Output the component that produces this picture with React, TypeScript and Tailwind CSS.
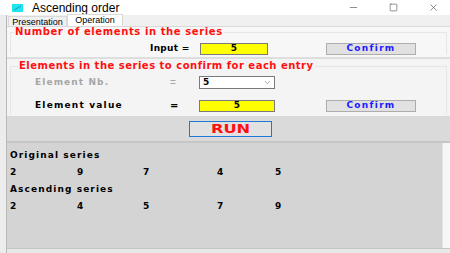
import { Minus, Square, X, ChevronDown } from "lucide-react";

const ORIGINAL = [2, 9, 7, 4, 5];
const SORTED = [2, 4, 5, 7, 9];
const COLS = ["w-[67px]", "w-[66px]", "w-[74px]", "w-[58px]", "w-[40px]"];

const bold = "font-['DejaVu_Sans',Verdana,sans-serif] font-bold";

function Confirm() {
  return (
    <button className={`w-[90px] h-[12px] border border-[#adadad] bg-[#e1e1e1] text-[#1a1aff] text-[9px] tracking-[1.3px] leading-none flex items-center justify-center ${bold}`}>
      Confirm
    </button>
  );
}

function Row({ values }: { values: number[] }) {
  return (
    <div className="flex h-[17px] items-center">
      {values.map((v, i) => (
        <span key={i} className={`${COLS[i]} text-[9px] text-black ${bold}`}>
          {v}
        </span>
      ))}
    </div>
  );
}

export default function App() {
  return (
    <div className="w-[450px] h-[253px] overflow-hidden bg-[#f0f0f0] font-['Liberation_Sans',Arial,sans-serif] flex flex-col">
      {/* title bar */}
      <div className="h-[15px] bg-white flex items-center shrink-0">
        <svg width="11" height="8" viewBox="0 0 11 8" className="ml-[12px]">
          <rect width="11" height="8" fill="#20e4ee" />
          <path d="M2 6 L9 2" stroke="#1c9fc0" strokeWidth="1" />
        </svg>
        <span className="ml-[9px] text-[12px] text-black leading-none">Ascending order</span>
        <div className="ml-auto flex items-center gap-[30px] mr-[11px] text-[#333]">
          <Minus size={11} strokeWidth={1.2} />
          <Square size={9} strokeWidth={1.4} />
          <X size={11} strokeWidth={1.2} />
        </div>
      </div>

      <div className="flex flex-1 min-h-0">
        <div className="w-[7px] bg-[#ececec] border-r border-[#b8b8b8] shrink-0" />
        <div className="flex-1 flex flex-col min-w-0">
          {/* tabs */}
          <div className="h-[12px] flex items-end pl-[1px] border-b border-[#d9d9d9] shrink-0">
            <div className="h-[10px] w-[59px] border border-b-0 border-[#d9d9d9] bg-[#f0f0f0] text-[9px] leading-[10px] text-black text-center">
              Presentation
            </div>
            <div className="h-[12px] w-[56px] border border-b-0 border-[#d9d9d9] bg-white text-[9px] leading-[11px] text-black text-center">
              Operation
            </div>
          </div>

          {/* group 1 */}
          <div className="h-[30px] bg-[#f7f7f7] px-[3px] shrink-0">
            <fieldset className="h-[28px] border border-[#e6e6e6] border-b-transparent pl-[3px]">
              <legend className={`px-[1px] text-[10px] tracking-[0.6px] leading-[10px] text-[#ff1010] ${bold}`}>
                Number of elements in the series
              </legend>
              <div className="flex items-center mt-[5px]">
                <span className={`ml-[136px] w-[50px] text-[9px] tracking-[0.3px] text-black ${bold}`}>Input =</span>
                <div className={`w-[68px] h-[12px] border border-[#7a7a7a] bg-[#ffff00] text-[9px] flex items-center justify-center leading-none ${bold}`}>
                  5
                </div>
                <div className="ml-[58px]">
                  <Confirm />
                </div>
              </div>
            </fieldset>
          </div>

          <div className="h-[2px] bg-[#dedede] shrink-0" />

          {/* group 2 */}
          <div className="h-[57px] bg-[#f4f4f4] px-[3px] pt-[2px] shrink-0">
            <fieldset className="h-[54px] border border-[#e6e6e6] border-b-transparent pl-[3px]">
              <legend className={`ml-[4px] px-[1px] text-[10px] tracking-[0.5px] leading-[10px] text-[#ff1010] ${bold}`}>
                Elements in the series to confirm for each entry
              </legend>
              <div className="flex items-center mt-[4px]">
                <span className={`ml-[21px] w-[135px] text-[9px] tracking-[1.1px] text-[#a6a6a6] ${bold}`}>Element Nb.</span>
                <span className="w-[29px] text-[10px] text-[#a6a6a6]">=</span>
                <div className={`w-[76px] h-[13px] border border-[#7a7a7a] bg-white text-[9px] flex items-center justify-between pl-[3px] pr-[2px] leading-none ${bold}`}>
                  <span>5</span>
                  <ChevronDown size={9} strokeWidth={1.5} className="text-[#666]" />
                </div>
              </div>
              <div className="flex items-center mt-[8px]">
                <span className={`ml-[21px] w-[135px] text-[9px] tracking-[1.2px] text-black ${bold}`}>Element value</span>
                <span className={`w-[29px] text-[10px] text-black ${bold}`}>=</span>
                <div className={`w-[76px] h-[12px] border border-[#7a7a7a] bg-[#ffff00] text-[9px] flex items-center justify-center leading-none ${bold}`}>
                  5
                </div>
                <div className="ml-[51px]">
                  <Confirm />
                </div>
              </div>
            </fieldset>
          </div>

          {/* run */}
          <div className="h-[25px] bg-[#dadada] flex items-center shrink-0">
            <button className="ml-[182px] w-[83px] h-[16px] border-[1.5px] border-[#1e78d7] bg-[#e1e1e1] flex items-center justify-center">
              <span className={`inline-block scale-x-[1.35] text-[#ff1010] text-[12px] leading-none ${bold}`}>RUN</span>
            </button>
          </div>

          {/* output */}
          <div className="h-[107px] flex border-t-2 border-[#c6c6c6] shrink-0">
            <div className="flex-1 bg-[#d4d4d4] pl-[3px] pt-[4px]">
              <div className={`h-[17px] flex items-center text-[9px] tracking-[1.1px] text-black ${bold}`}>Original series</div>
              <Row values={ORIGINAL} />
              <div className={`h-[17px] flex items-center text-[9px] tracking-[1.1px] text-black ${bold}`}>Ascending series</div>
              <Row values={SORTED} />
            </div>
            <div className="w-[8px] bg-[#f6f6f6] border-l border-[#e4e4e4]" />
          </div>
          <div className="flex-1 bg-[#e8e8e8] border-t border-[#c6c6c6]" />
        </div>
      </div>
    </div>
  );
}
